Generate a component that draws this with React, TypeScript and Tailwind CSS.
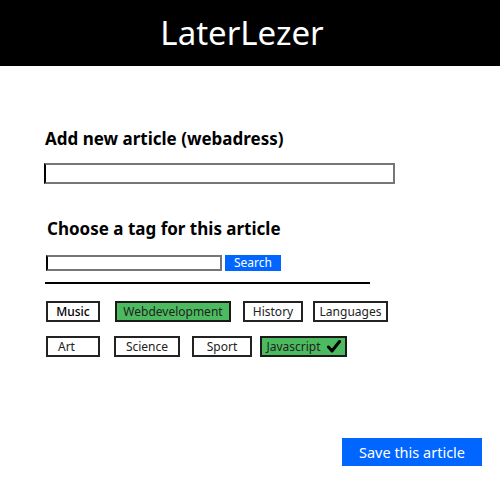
import React from "react";

const font = { fontFamily: '"Noto Sans", "Open Sans", sans-serif' };

function Tag({
  label,
  w,
  ml,
  active,
  bold,
  check,
  left,
}: {
  label: string;
  w: string;
  ml: string;
  active?: boolean;
  bold?: boolean;
  check?: boolean;
  left?: boolean;
}) {
  return (
    <div
      className={`${w} ${ml} h-[21px] flex items-center ${left ? "justify-start pl-[10px]" : "justify-center"} gap-[6px] text-[12px] leading-none ${
        active ? "bg-[#4cbb5f] border-2 border-[#1a1a1a] text-[#1a1a1a]" : "bg-white border-2 border-[#222]"
      } ${bold ? "text-black font-medium" : "text-[#222]"}`}
    >
      <span>{label}</span>
      {check && (
        <svg width="14" height="13" viewBox="0 0 14 13">
          <path d="M1.5 7 L5 11 L12.5 1.5" fill="none" stroke="#000" strokeWidth="3" strokeLinecap="round" strokeLinejoin="round" />
        </svg>
      )}
    </div>
  );
}

export default function App() {
  return (
    <div className="w-[500px] h-[500px] bg-white relative overflow-hidden" style={font}>
      <header className="h-[66px] bg-black flex items-center justify-center">
        <h1 className="text-white text-[33px] leading-none mt-[-2px] mr-[16px]">LaterLezer</h1>
      </header>
      <main className="pl-[44px] pt-[64px] flex flex-col">
        <h2 className="ml-[1px] text-[17px] font-bold leading-none text-black">Add new article (webadress)</h2>
        <input className="mt-[16px] w-[351px] h-[21px] border-2 border-[#767676] border-l-black" />
        <h2 className="mt-[36px] ml-[3px] text-[17px] font-bold leading-none text-black">Choose a tag for this article</h2>
        <div className="mt-[18px] ml-[2px] flex items-center">
          <input className="w-[176px] h-[16px] border-2 border-[#767676] border-l-black" />
          <button className="ml-[3px] w-[56px] h-[16px] bg-[#0066ff] text-white text-[12px] leading-none flex items-center justify-center">
            Search
          </button>
        </div>
        <div className="mt-[11px] ml-[1px] w-[325px] h-[2px] bg-black" />
        <div className="mt-[17px] ml-[2px] flex">
          <Tag label="Music" w="w-[54px]" ml="ml-0" bold />
          <Tag label="Webdevelopment" w="w-[116px]" ml="ml-[15px]" active />
          <Tag label="History" w="w-[60px]" ml="ml-[12px]" />
          <Tag label="Languages" w="w-[75px]" ml="ml-[10px]" />
        </div>
        <div className="mt-[14px] ml-[2px] flex">
          <Tag label="Art" w="w-[54px]" ml="ml-0" left />
          <Tag label="Science" w="w-[66px]" ml="ml-[14px]" />
          <Tag label="Sport" w="w-[60px]" ml="ml-[12px]" />
          <Tag label="Javascript" w="w-[87px]" ml="ml-[8px]" active check />
        </div>
      </main>
      <div className="absolute left-[342px] top-[438px]">
        <button className="w-[140px] h-[28px] bg-[#0066ff] text-white text-[14.5px] leading-none flex items-center justify-center">
          Save this article
        </button>
      </div>
    </div>
  );
}
